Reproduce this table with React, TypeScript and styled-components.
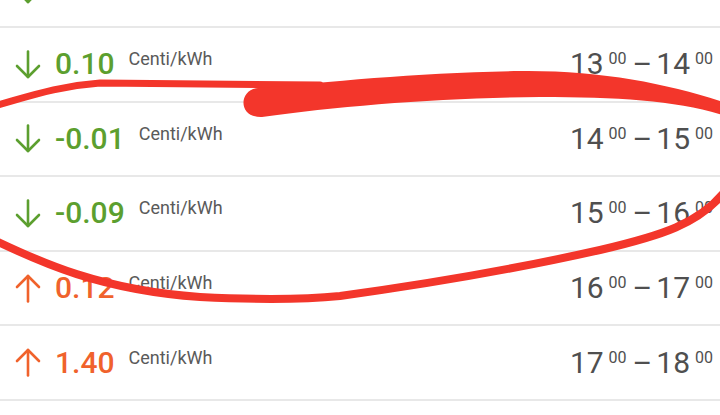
import styled, { createGlobalStyle } from "styled-components";

const GlobalStyle = createGlobalStyle`
  html, body {
    margin: 0;
    padding: 0;
    background: #ffffff;
    overflow: hidden;
  }

  body {
    font-family: Roboto, "Noto Sans", "Liberation Sans", sans-serif;
  }
`;

const COLORS = {
  down: "#5c9f2f",
  up: "#f0622c",
  text: "#4f4f4f",
  unit: "#5a5a5a",
  line: "#e8e8e8",
  marker: "#f3362b",
};

const Screen = styled.div`
  position: relative;
  width: 720px;
  height: 415px;
  overflow: hidden;
  background: #ffffff;
`;

const List = styled.div`
  display: flex;
  flex-direction: column;
  margin-top: -46.6px;
`;

const Row = styled.div`
  box-sizing: border-box;
  display: flex;
  align-items: center;
  justify-content: space-between;
  height: 74.6px;
  padding: 0 7px 0 15px;
  border-bottom: 2px solid ${COLORS.line};
`;

const Price = styled.div<{ $up: boolean }>`
  display: flex;
  align-items: center;
  gap: 14px;
  color: ${(p) => (p.$up ? COLORS.up : COLORS.down)};
`;

const Amount = styled.div`
  display: flex;
  align-items: flex-start;
  gap: 14px;
`;

const Value = styled.span`
  font-size: 30px;
  line-height: 30px;
  font-weight: 500;
`;

const Unit = styled.span`
  margin-top: 1px;
  font-size: 18px;
  line-height: 18px;
  color: ${COLORS.unit};
`;

const Slot = styled.div`
  display: flex;
  align-items: flex-start;
  color: ${COLORS.text};
`;

const Hour = styled.span`
  font-size: 30px;
  line-height: 30px;
`;

const Minutes = styled.span`
  margin: 2px 0 0 5px;
  font-size: 16px;
  line-height: 16px;
`;

const Dash = styled.span`
  margin: 0 4px 0 6px;
  font-size: 30px;
  line-height: 30px;
`;

const Marker = styled.svg`
  position: absolute;
  inset: 0;
  pointer-events: none;
`;

function Arrow({ up }: { up: boolean }) {
  return (
    <svg width="26" height="29" viewBox="0 0 26 29" fill="none">
      <g
        stroke="currentColor"
        strokeWidth="2.6"
        strokeLinecap="round"
        strokeLinejoin="round"
        transform={up ? "rotate(180 13 14.5)" : undefined}
      >
        <path d="M13 1.5V27" />
        <path d="M2 16L13 27L24 16" />
      </g>
    </svg>
  );
}

interface Hourly {
  value: string;
  from: number;
}

const prices: Hourly[] = [
  { value: "0.06", from: 12 },
  { value: "0.10", from: 13 },
  { value: "-0.01", from: 14 },
  { value: "-0.09", from: 15 },
  { value: "0.12", from: 16 },
  { value: "1.40", from: 17 },
  { value: "1.52", from: 18 },
];

function PriceRow({ value, from }: Hourly) {
  const up = from >= 16;

  return (
    <Row>
      <Price $up={up}>
        <Arrow up={up} />
        <Amount>
          <Value>{value}</Value>
          <Unit>Centi/kWh</Unit>
        </Amount>
      </Price>
      <Slot>
        <Hour>{from}</Hour>
        <Minutes>00</Minutes>
        <Dash>–</Dash>
        <Hour>{from + 1}</Hour>
        <Minutes>00</Minutes>
      </Slot>
    </Row>
  );
}

function App() {
  return (
    <Screen>
      <GlobalStyle />
      <List>
        {prices.map((p) => (
          <PriceRow key={p.from} {...p} />
        ))}
      </List>
      {/* hand-drawn circle on top of the screenshot */}
      <Marker width="720" height="415" viewBox="0 0 720 415">
        <g fill="none" stroke={COLORS.marker} strokeLinecap="round" strokeLinejoin="round">
          <path d="M-6 106C30 96 58 86 100 83L320 85" strokeWidth="7" />
          <path
            d="M-6 240C40 262 100 290 200 297C260 300 310 299 340 296C420 285 520 268 600 250C660 236 700 224 726 190"
            strokeWidth="8"
          />
        </g>
        <path
          fill={COLORS.marker}
          d="M258 88C330 82 420 72 520 71C600 70 670 84 726 103L726 116C680 101 620 97 540 97C440 98 340 106 262 117C238 118 238 90 258 88Z"
        />
      </Marker>
    </Screen>
  );
}

export default App;
